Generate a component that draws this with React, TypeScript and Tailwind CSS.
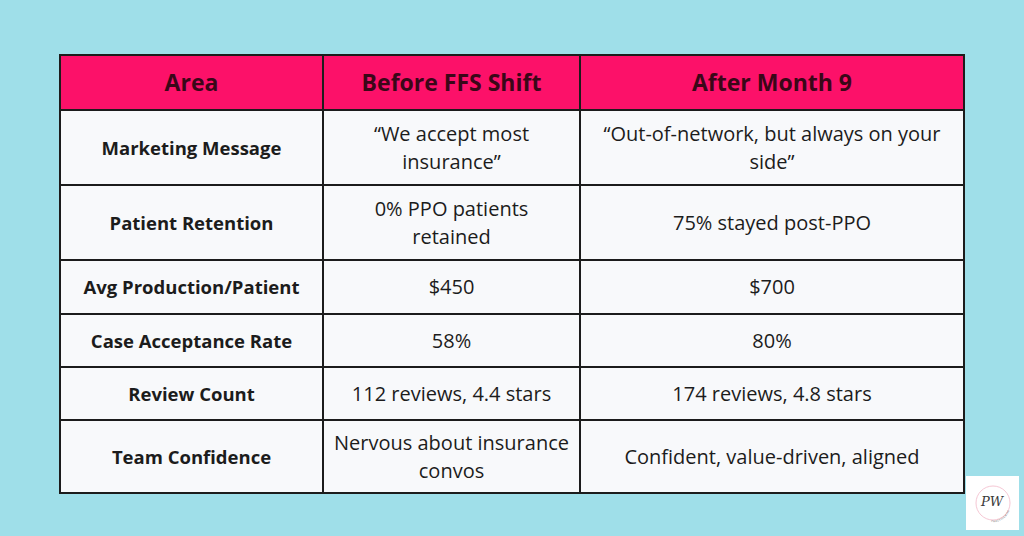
import React from 'react';

type Row = { area: string; before: string[]; after: string[]; h: string };

const rows: Row[] = [
  { area: 'Marketing Message', before: ['“We accept most', 'insurance”'], after: ['“Out-of-network, but always on your', 'side”'], h: 'h-[73px]' },
  { area: 'Patient Retention', before: ['0% PPO patients', 'retained'], after: ['75% stayed post-PPO'], h: 'h-[73px]' },
  { area: 'Avg Production/Patient', before: ['$450'], after: ['$700'], h: 'h-[52px]' },
  { area: 'Case Acceptance Rate', before: ['58%'], after: ['80%'], h: 'h-[51px]' },
  { area: 'Review Count', before: ['112 reviews, 4.4 stars'], after: ['174 reviews, 4.8 stars'], h: 'h-[51px]' },
  { area: 'Team Confidence', before: ['Nervous about insurance', 'convos'], after: ['Confident, value-driven, aligned'], h: 'h-[71px]' },
];

function Logo() {
  return (
    <div className="flex h-[54px] w-[53px] items-center justify-center bg-white">
      <svg width="46" height="46" viewBox="0 0 46 46">
        <defs>
          <path id="arc" d="M 12 38 A 17 17 0 0 0 40 23" />
        </defs>
        <circle cx="23" cy="23" r="17" fill="none" stroke="#f2b9c9" strokeWidth="0.8" />
        <text
          x="22"
          y="26"
          textAnchor="middle"
          fontFamily="'DejaVu Serif', serif"
          fontStyle="italic"
          fontSize="13"
          fill="#3a3a3a"
        >
          PW
        </text>
        <text fontFamily="'Liberation Sans', sans-serif" fontSize="2.6" fill="#666" letterSpacing="0.3">
          <textPath href="#arc" startOffset="25%">PRACTICEWISE</textPath>
        </text>
      </svg>
    </div>
  );
}

function Cell({ lines, bold, h }: { lines: string[]; bold?: boolean; h: string }) {
  return (
    <div
      className={`${h} flex flex-col items-center justify-center bg-[#f8f9fb] px-[6px] text-center leading-[28px] whitespace-nowrap text-[#1c1c1c] ${
        bold ? 'text-[18.5px] font-bold' : 'text-[20px] font-normal'
      }`}
    >
      {lines.map((l) => (
        <span key={l}>{l}</span>
      ))}
    </div>
  );
}

export default function App() {
  return (
    <div
      className="flex h-[536px] w-[1024px] flex-col bg-[#9fdfe9]"
      style={{ fontFamily: "'Open Sans', 'Liberation Sans', sans-serif" }}
    >
      <div className="flex pl-[59px] pt-[54px]">
        <div className="grid w-[906px] grid-cols-[261px_255px_382px] gap-[2px] border-2 border-[#1c1c1c] bg-[#1c1c1c]">
          {['Area', 'Before FFS Shift', 'After Month 9'].map((t) => (
            <div
              key={t}
              className="flex h-[53px] items-center justify-center bg-[#fc1169] text-[23px] font-bold text-[#3a0718]"
            >
              {t}
            </div>
          ))}
          {rows.map((r) => (
            <React.Fragment key={r.area}>
              <Cell bold lines={[r.area]} h={r.h} />
              <Cell lines={r.before} h={r.h} />
              <Cell lines={r.after} h={r.h} />
            </React.Fragment>
          ))}
        </div>
      </div>
      <div className="flex justify-end pr-[5px]">
        <div className="-mt-[18px]">
          <Logo />
        </div>
      </div>
    </div>
  );
}
